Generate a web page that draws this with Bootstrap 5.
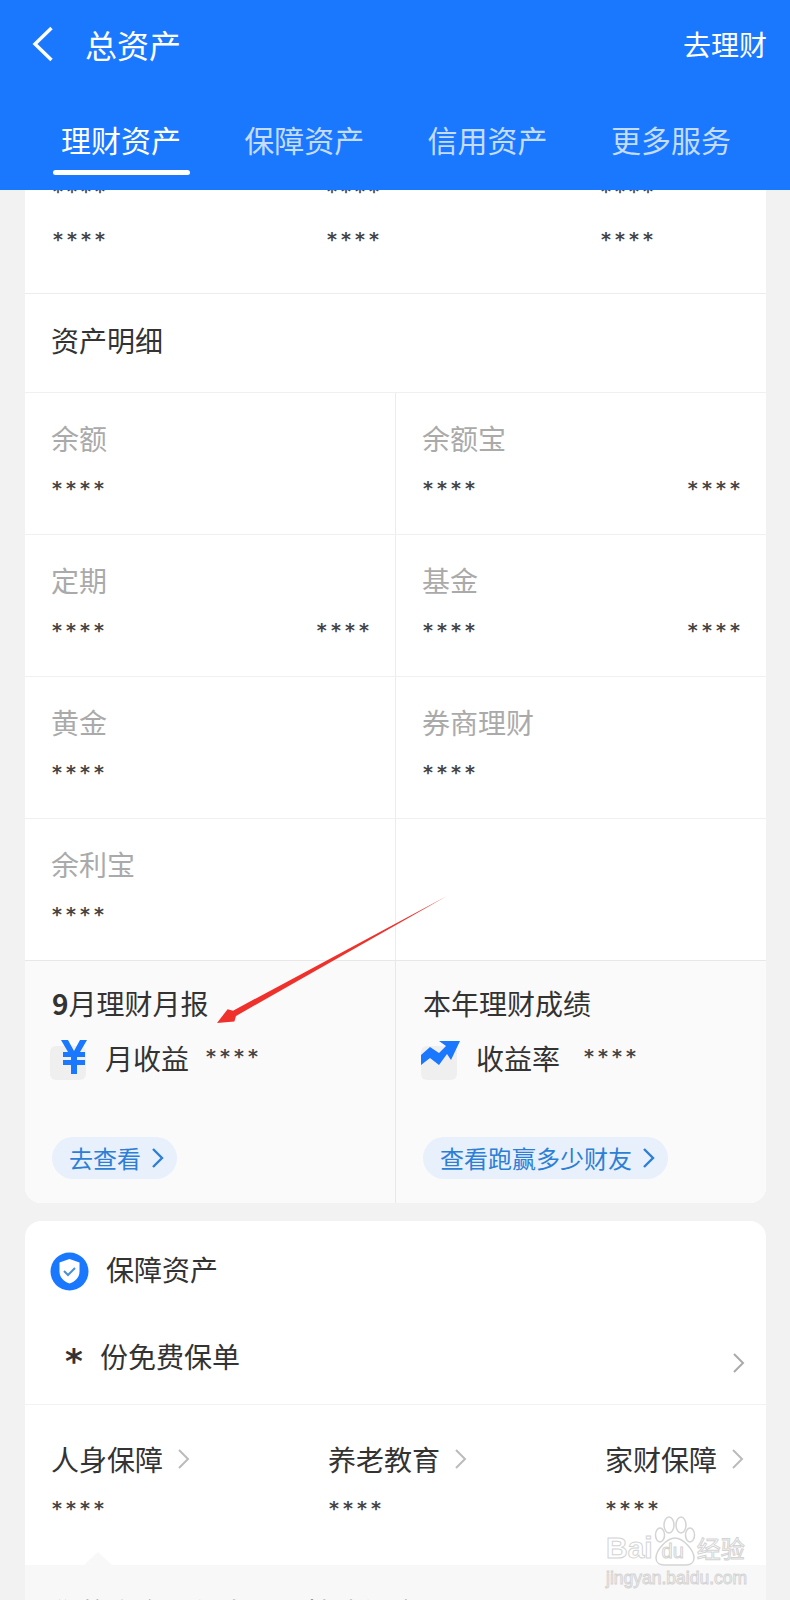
<!DOCTYPE html>
<html lang="zh-CN">
<head>
  <meta charset="UTF-8" />
  <meta name="viewport" content="width=device-width, initial-scale=1.0"/>
  <title>总资产</title>
  <link href="https://cdn.jsdelivr.net/npm/bootstrap@5.3.3/dist/css/bootstrap.min.css" rel="stylesheet" />
  <style>
    html, body { height: 1600px; overflow: hidden; }
    body { position: relative; background: #f2f2f2; color: #333; font-family: "Noto Sans CJK SC", "Liberation Sans", sans-serif; font-size: 28px; line-height: 40px; }
    .app-head { height: 190px; background: #1a78ff; color: #fff; padding: 22px 23px 0 32px; }
    .head-title { font-size: 32px; margin-left: 31px; line-height: 44px; }
    .head-link { font-size: 28px; line-height: 44px; }
    .tab-strip { margin-top: 51px; padding-left: 29px; gap: 63.3px; }
    .tab-item { width: 120px; font-size: 30px; line-height: 44px; color: #c4dcff; text-align: center; white-space: nowrap; }
    .tab-item.on { color: #fff; position: relative; }
    .tab-item.on::after { content: ""; position: absolute; left: -8px; right: -9px; top: 53px; height: 5px; border-radius: 3px; background: #fff; }
    .page-wrap { padding: 0 24px 0 25px; height: 1410px; overflow: hidden; }
    .sheet { background: #fff; }
    .top-sheet { border-radius: 0 0 16px 16px; overflow: hidden; }
    .stars { font-family: "DejaVu Sans", sans-serif; font-size: 19px; font-weight: 700; letter-spacing: 4.1px; line-height: 20px; height: 20px; color: #444; white-space: nowrap; }
    .clip-stars { height: 5px; overflow: hidden; }
    .clip-stars .stars { margin-top: -9px; }
    .three-col { padding-left: 28px; }
    .three-col > div { width: 274px; flex: none; }
    .stars-row { height: 99px; padding-top: 34px; border-bottom: 1px solid #ececec; }
    .detail-head { height: 99px; padding: 26px 26px 0; border-bottom: 1px solid #f0f0f0; line-height: 40px; }
    .asset-cell { width: 370px; height: 142px; padding: 25px 22px 0 26px; border-bottom: 1px solid #f0f0f0; }
    .asset-cell.side-r { width: 371px; border-left: 1px solid #ececec; }
    .asset-label { color: #aaa; line-height: 40px; }
    .asset-cell .stars { margin: 20px 0 0 1px; }
    .report-cell { width: 370px; height: 243px; padding: 22px 27px 0; background: #fafafa; border-top: 1px solid #e8e8e8; margin-top: -1px; }
    .report-cell.side-r { width: 371px; border-left: 1px solid #e8e8e8; }
    .num-nine { font-weight: 700; }
    .report-line { margin-top: 15px; height: 40px; }
    .report-line .stars { margin-left: 17px; margin-top: -4px; }
    .report-line .stars.wider { margin-left: 24px; }
    .tile-icon { width: 40px; height: 40px; position: relative; flex: none; margin-left: -2px; margin-right: 15px; }
    .tile-icon::before { content: ""; position: absolute; left: 0; top: 8px; width: 36px; height: 34px; background: #efefef; border-radius: 6px; }
    .tile-icon svg { position: relative; display: block; }
    .go-pill { display: inline-flex; align-items: center; height: 42px; margin-top: 59px; padding: 0 13px 0 17px; border-radius: 21px; background: #e8f0fb; color: #2d7fd6; font-size: 24px; line-height: 42px; gap: 10px; white-space: nowrap; }
    .second-sheet { margin-top: 18px; border-radius: 16px 16px 0 0; height: 400px; overflow: hidden; }
    .safe-head { padding: 12px 25px 0; height: 87px; }
    .safe-head svg { flex: none; margin-right: 17px; margin-top: 1px; }
    .safe-title { margin-top: -3px; }
    .free-row { height: 97px; padding: 28px 21px 0 41px; border-bottom: 1px solid #f2f2f2; }
    .big-star { font-family: "DejaVu Sans", sans-serif; font-weight: 700; font-size: 34px; width: 34px; line-height: 40px; padding-top: 5px; margin-left: -1px; margin-right: 1px; }
    .cover-row { padding: 34px 0 0 26px; height: 160px; gap: 0; }
    .cover-item { width: 277px; flex: none; }
    .cover-name { gap: 14px; line-height: 40px; }
    .cover-item .stars { margin: 19px 0 0 1px; }
    .tip-panel { position: relative; height: 60px; background: #f8f8f8; padding: 27px 27px 0; white-space: nowrap; }
    .tip-panel::before { content: ""; position: absolute; left: 59px; top: -13px; border-left: 14px solid transparent; border-right: 14px solid transparent; border-bottom: 13px solid #f8f8f8; }
    .red-arrow { position: absolute; left: 205px; top: 885px; }
    .stamp { position: absolute; left: 606px; top: 1516px; width: 150px; color: #fff; -webkit-text-stroke: 1px #d4d4d4; font-family: "Liberation Sans", sans-serif; white-space: nowrap; }
    .stamp-main { font-size: 30px; line-height: 36px; font-weight: 700; margin-top: 14px; }
    .stamp-du { display: inline-block; width: 40px; text-align: center; font-size: 20px; font-weight: 400; }
    .stamp-jy { font-family: "Noto Sans CJK SC", sans-serif; font-size: 24px; margin-left: 4px; font-weight: 400; }
    .stamp-url { font-size: 17.500px; line-height: 24px; margin-top: -3px; }
    .stamp svg { position: absolute; left: 47px; top: 0; }
  </style>
</head>
<body>

  <header class="app-head">
    <div class="d-flex align-items-center">
      <svg width="22" height="36" viewBox="0 0 22 36" fill="none" stroke="#fff" stroke-width="3.4"><path d="M19.5 2 3 18l16.5 16"/></svg>
      <div class="head-title flex-grow-1">总资产</div>
      <div class="head-link">去理财</div>
    </div>
    <div class="tab-strip d-flex">
      <div class="tab-item on">理财资产</div>
      <div class="tab-item">保障资产</div>
      <div class="tab-item">信用资产</div>
      <div class="tab-item">更多服务</div>
    </div>
  </header>

  <main class="page-wrap">
    <section class="sheet top-sheet">
      <div class="clip-stars three-col d-flex">
        <div><div class="stars">****</div></div>
        <div><div class="stars">****</div></div>
        <div><div class="stars">****</div></div>
      </div>
      <div class="stars-row three-col d-flex">
        <div><div class="stars">****</div></div>
        <div><div class="stars">****</div></div>
        <div><div class="stars">****</div></div>
      </div>
      <div class="detail-head">资产明细</div>

      <div class="d-flex">
        <div class="asset-cell">
          <div class="asset-label">余额</div>
          <div class="stars">****</div>
        </div>
        <div class="asset-cell side-r">
          <div class="asset-label">余额宝</div>
          <div class="d-flex justify-content-between"><div class="stars">****</div><div class="stars">****</div></div>
        </div>
      </div>
      <div class="d-flex">
        <div class="asset-cell">
          <div class="asset-label">定期</div>
          <div class="d-flex justify-content-between"><div class="stars">****</div><div class="stars">****</div></div>
        </div>
        <div class="asset-cell side-r">
          <div class="asset-label">基金</div>
          <div class="d-flex justify-content-between"><div class="stars">****</div><div class="stars">****</div></div>
        </div>
      </div>
      <div class="d-flex">
        <div class="asset-cell">
          <div class="asset-label">黄金</div>
          <div class="stars">****</div>
        </div>
        <div class="asset-cell side-r">
          <div class="asset-label">券商理财</div>
          <div class="stars">****</div>
        </div>
      </div>
      <div class="d-flex">
        <div class="asset-cell">
          <div class="asset-label">余利宝</div>
          <div class="stars">****</div>
        </div>
        <div class="asset-cell side-r"></div>
      </div>

      <div class="d-flex">
        <div class="report-cell">
          <div><span class="num-nine">9</span>月理财月报</div>
          <div class="report-line d-flex align-items-center">
            <div class="tile-icon">
              <svg width="40" height="36" viewBox="0 0 40 36" fill="#1a78ff"><path d="M11 2h7l6 11 6-11h7l-7 12h5v5h-8v3h8v5h-8v9h-6v-9h-8v-5h8v-3h-8v-5h5z"/></svg>
            </div>
            <div>月收益</div>
            <div class="stars">****</div>
          </div>
          <div class="go-pill">去查看
            <svg width="13" height="22" viewBox="0 0 13 22" fill="none" stroke="#2d7fd6" stroke-width="2.4"><path d="M2 2l9 9-9 9"/></svg>
          </div>
        </div>
        <div class="report-cell side-r">
          <div>本年理财成绩</div>
          <div class="report-line d-flex align-items-center">
            <div class="tile-icon">
              <svg width="40" height="36" viewBox="0 0 40 36" fill="#1a78ff"><path d="M0 17l9-8 9 6 7-7-7-5h21L30 22l-4-6-8 11-9-7-9 7z"/></svg>
            </div>
            <div>收益率</div>
            <div class="stars wider">****</div>
          </div>
          <div class="go-pill">查看跑赢多少财友
            <svg width="13" height="22" viewBox="0 0 13 22" fill="none" stroke="#2d7fd6" stroke-width="2.4"><path d="M2 2l9 9-9 9"/></svg>
          </div>
        </div>
      </div>
    </section>

    <section class="sheet second-sheet">
      <div class="safe-head d-flex align-items-center">
        <svg width="39" height="39" viewBox="0 0 39 39"><circle cx="19.5" cy="19.5" r="19" fill="#1a78ff"/><path d="M19.5 7l10 3.5v9c0 6-4.500 10-10 12-5.500-2-10-6-10-12v-9z" fill="#fff"/><path d="M14 19l4 4 7-7" fill="none" stroke="#4a90d9" stroke-width="2"/></svg>
        <div class="safe-title">保障资产</div>
      </div>
      <div class="free-row d-flex">
        <div class="big-star">*</div>
        <div class="flex-grow-1">份免费保单</div>
        <svg class="mt-3" width="13" height="22" viewBox="0 0 13 22" fill="none" stroke="#aaa" stroke-width="2"><path d="M2 2l9 9-9 9"/></svg>
      </div>
      <div class="cover-row d-flex">
        <div class="cover-item">
          <div class="cover-name d-flex align-items-center">人身保障<svg width="13" height="22" viewBox="0 0 13 22" fill="none" stroke="#bbb" stroke-width="2"><path d="M2 2l9 9-9 9"/></svg></div>
          <div class="stars">****</div>
        </div>
        <div class="cover-item">
          <div class="cover-name d-flex align-items-center">养老教育<svg width="13" height="22" viewBox="0 0 13 22" fill="none" stroke="#bbb" stroke-width="2"><path d="M2 2l9 9-9 9"/></svg></div>
          <div class="stars">****</div>
        </div>
        <div class="cover-item">
          <div class="cover-name d-flex align-items-center">家财保障<svg width="13" height="22" viewBox="0 0 13 22" fill="none" stroke="#bbb" stroke-width="2"><path d="M2 2l9 9-9 9"/></svg></div>
          <div class="stars">****</div>
        </div>
      </div>
      <div class="tip-panel">你的资产，优先配置基础保障</div>
    </section>
  </main>

  <svg class="red-arrow" width="250" height="150" viewBox="0 0 250 150"><path d="M242 11 28 125.700l-5.400-1.500L12 138l17.400-1.600 1.600-5.500z" fill="#f0302a"/></svg>

  <div class="stamp">
    <svg width="44" height="50" viewBox="0 0 44 50" fill="none" stroke="#d4d4d4" stroke-width="1.500"><ellipse cx="7" cy="19" rx="4.500" ry="7"/><ellipse cx="16" cy="9" rx="5" ry="8"/><ellipse cx="28" cy="9" rx="5" ry="8"/><ellipse cx="37" cy="19" rx="4.500" ry="7"/><path d="M22 22c-8 0-19 12-19 20 0 5 4 7 8 7h22c4 0 8-2 8-7 0-8-11-20-19-20z"/></svg>
    <div class="stamp-main">Bai<span class="stamp-du">du</span><span class="stamp-jy">经验</span></div>
    <div class="stamp-url">jingyan.baidu.com</div>
  </div>

  <script src="https://cdn.jsdelivr.net/npm/bootstrap@5.3.3/dist/js/bootstrap.bundle.min.js"></script>
</body>
</html>
